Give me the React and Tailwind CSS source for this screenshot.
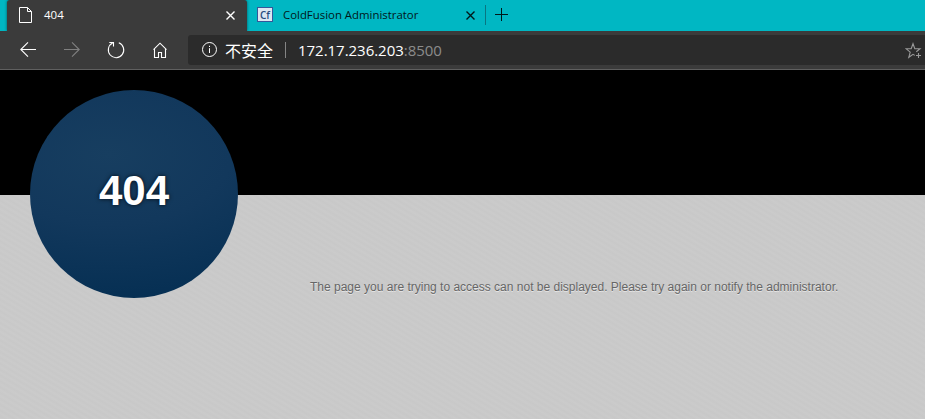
import React from "react";

function CloseIcon({ className }) {
  return (
    <svg className={className} width="9" height="9" viewBox="0 0 9 9" fill="none" stroke="currentColor" strokeWidth="1.4">
      <path d="M0.5 0.5 8.5 8.5M8.5 0.5 0.5 8.5" />
    </svg>
  );
}

function TabStrip() {
  return (
    <div className="flex h-[31px] w-full bg-[#00b7c3] pl-[7px]">
      <div className="flex h-[31px] w-[240px] items-center rounded-t-[3px] bg-[#3b3b3b] pr-[12px] pl-[12px] text-white shadow-[0_0_3px_rgba(0,0,0,0.55)]">
        <svg width="13" height="16" viewBox="0 0 13 16" fill="none" stroke="currentColor" strokeWidth="1" className="mb-px shrink-0">
          <path d="M0.5 0.5H8.5L12.5 4.5V15.5H0.5ZM8.5 0.5V4.5H12.5" />
        </svg>
        <span className="mb-[2px] ml-[12px] flex-1 text-[11.5px] leading-4">404</span>
        <CloseIcon />
      </div>
      <div className="flex h-[31px] w-[239px] items-center pr-[11px] pl-[10px] text-[#00181a]">
        <span className="mb-[2px] flex h-[15px] w-[16px] shrink-0 items-center justify-center border border-[#34579a] bg-[#dce7f1] font-['Open_Sans',sans-serif] text-[10px] leading-none font-semibold text-[#264b7d]">
          Cf
        </span>
        <span className="mb-[2px] ml-[10px] flex-1 text-[11.4px] leading-4 whitespace-nowrap">ColdFusion Administrator</span>
        <CloseIcon />
      </div>
      <div className="mt-[5px] ml-[-1px] h-5 w-px bg-[#087681]" />
      <svg width="13" height="13" viewBox="0 0 13 13" stroke="#00181a" className="mt-[8px] ml-[9px]">
        <path d="M0 6.5H13M6.5 0V13" />
      </svg>
    </div>
  );
}

function Toolbar() {
  return (
    <div className="flex h-[39px] w-full border-b border-[#606060] bg-[#3b3b3b] text-white">
      <svg width="188" height="38" viewBox="0 0 188 38" fill="none" stroke="currentColor" strokeWidth="1.1" className="shrink-0">
        <path d="M36 18.5H20.8M28 11.3 20.8 18.5 28 25.7" />
        <path stroke="#808080" d="M64 18.5H79.2M72 11.3 79.2 18.5 72 25.7" />
        <path d="M118.8 11.8A7.7 7.7 0 1 1 112.6 12.1M109.3 11.5H113.5V15.5" />
        <path d="M153.5 18.7 160 12.2 166.5 18.7M154.5 18V26.5H158.5V21.5H161.5V26.5H165.5V18" />
      </svg>
      <div className="mt-[4px] flex h-[30px] flex-1 items-center rounded-l-[3px] bg-[#2b2b2b] pl-[14px]">
        <svg width="15" height="15" viewBox="0 0 15 15" fill="none" stroke="currentColor" className="mb-px shrink-0">
          <circle cx="7.5" cy="7.5" r="7" />
          <path d="M7.5 6.2V11M7.5 3.8V5" />
        </svg>
        <span className="ml-[8px] font-['Noto_Sans_CJK_SC',sans-serif] text-[16px] leading-5">不安全</span>
        <span className="ml-[12px] h-4 w-px bg-[#858585]" />
        <span className="ml-[12px] flex-1 text-[15px] leading-5 tracking-[-0.03px]">
          172.17.236.203<span className="text-[#8b8b8b]">:8500</span>
        </span>
        <svg width="18" height="17" viewBox="0 0 18 17" fill="none" stroke="#999999" strokeWidth="1.1" className="mr-[2px]">
          <path d="M9.8 13.4 8 12.3 3.8 15.3 5.2 10.1 1 6.7H6.2L8 1.7 9.8 6.7H15L11.3 9.7M13.5 11V16M11 13.5H16" />
        </svg>
      </div>
    </div>
  );
}

export default function App() {
  return (
    <div className="flex h-[419px] w-[925px] flex-col overflow-hidden bg-[#cacaca] font-['Open_Sans','Noto_Sans_CJK_SC',sans-serif]">
      <TabStrip />
      <Toolbar />
      <main className="flex h-[349px] items-start bg-[linear-gradient(#000_125px,transparent_125px),repeating-linear-gradient(31deg,#cbcbcb_0px,#c8c8c8_2.5px,#cbcbcb_5px)] pt-[20px] pl-[30px] font-['Liberation_Sans',Arial,sans-serif]">
        <div className="flex h-[208px] w-[208px] shrink-0 items-center justify-center rounded-full bg-[radial-gradient(ellipse_130%_75%_at_38%_31%,#173e60_0%,#12385c_45%,#042e52_100%)]">
          <h1 className="mt-[-7px] text-[42px] leading-none font-bold text-white [text-shadow:0_0_4px_rgba(0,0,0,0.8)]">404</h1>
        </div>
        <p className="mt-[189px] ml-[72px] text-[12px] leading-4 whitespace-nowrap text-[#666666] [text-shadow:0_1px_0_#e5e5e5]">
          The page you are trying to access can not be displayed. Please try again or notify the administrator.
        </p>
      </main>
    </div>
  );
}
